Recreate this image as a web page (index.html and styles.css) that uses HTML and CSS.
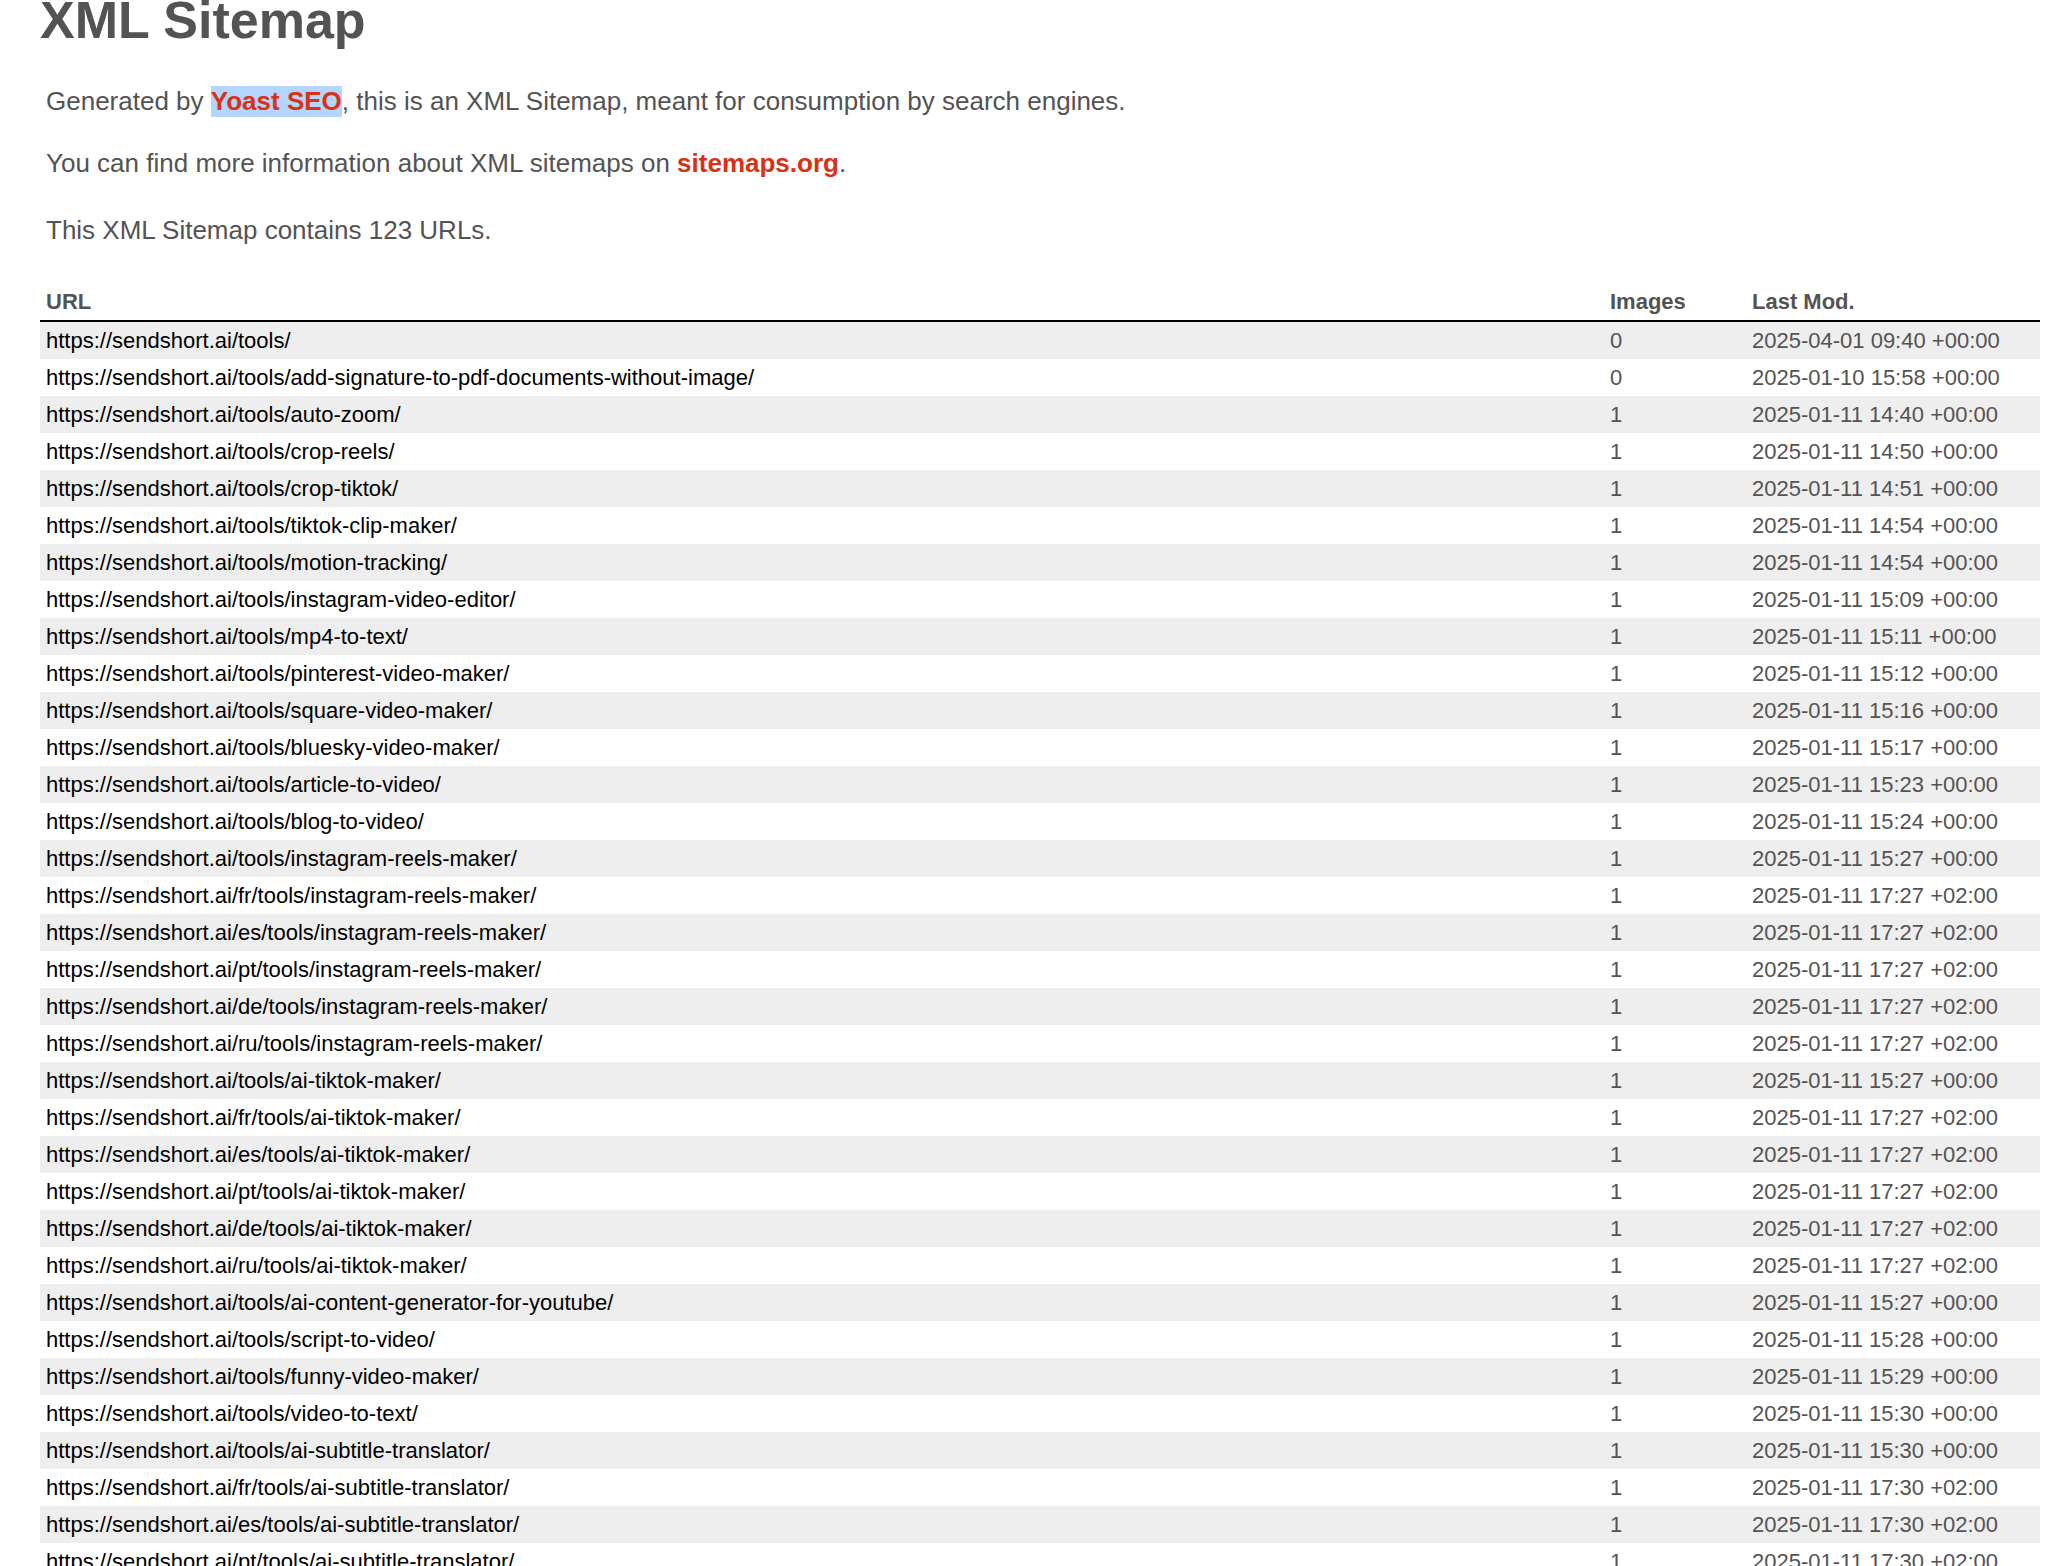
FILE: index.html
```html
<!DOCTYPE html>
<html lang="en">
<head>
<meta charset="utf-8">
<title>XML Sitemap</title>
<link rel="stylesheet" href="styles.css">
</head>
<body>
<div class="content">
  <h1 class="title">XML Sitemap</h1>
  <p class="expl expl-first">Generated by <a class="selected" href="#">Yoast SEO</a>, this is an XML Sitemap, meant for consumption by search engines.</p>
  <p class="expl expl-second">You can find more information about XML sitemaps on <a href="#">sitemaps.org</a>.</p>
  <p class="expl expl-third">This XML Sitemap contains 123 URLs.</p>
  <table class="sitemap">
    <colgroup>
      <col class="c-url">
      <col class="c-img">
      <col class="c-mod">
    </colgroup>
    <thead>
      <tr><th>URL</th><th>Images</th><th>Last Mod.</th></tr>
    </thead>
    <tbody>
      <tr><td><a href="#">https://sendshort.ai/tools/</a></td><td>0</td><td>2025-04-01 09:40 +00:00</td></tr>
      <tr><td><a href="#">https://sendshort.ai/tools/add-signature-to-pdf-documents-without-image/</a></td><td>0</td><td>2025-01-10 15:58 +00:00</td></tr>
      <tr><td><a href="#">https://sendshort.ai/tools/auto-zoom/</a></td><td>1</td><td>2025-01-11 14:40 +00:00</td></tr>
      <tr><td><a href="#">https://sendshort.ai/tools/crop-reels/</a></td><td>1</td><td>2025-01-11 14:50 +00:00</td></tr>
      <tr><td><a href="#">https://sendshort.ai/tools/crop-tiktok/</a></td><td>1</td><td>2025-01-11 14:51 +00:00</td></tr>
      <tr><td><a href="#">https://sendshort.ai/tools/tiktok-clip-maker/</a></td><td>1</td><td>2025-01-11 14:54 +00:00</td></tr>
      <tr><td><a href="#">https://sendshort.ai/tools/motion-tracking/</a></td><td>1</td><td>2025-01-11 14:54 +00:00</td></tr>
      <tr><td><a href="#">https://sendshort.ai/tools/instagram-video-editor/</a></td><td>1</td><td>2025-01-11 15:09 +00:00</td></tr>
      <tr><td><a href="#">https://sendshort.ai/tools/mp4-to-text/</a></td><td>1</td><td>2025-01-11 15:11 +00:00</td></tr>
      <tr><td><a href="#">https://sendshort.ai/tools/pinterest-video-maker/</a></td><td>1</td><td>2025-01-11 15:12 +00:00</td></tr>
      <tr><td><a href="#">https://sendshort.ai/tools/square-video-maker/</a></td><td>1</td><td>2025-01-11 15:16 +00:00</td></tr>
      <tr><td><a href="#">https://sendshort.ai/tools/bluesky-video-maker/</a></td><td>1</td><td>2025-01-11 15:17 +00:00</td></tr>
      <tr><td><a href="#">https://sendshort.ai/tools/article-to-video/</a></td><td>1</td><td>2025-01-11 15:23 +00:00</td></tr>
      <tr><td><a href="#">https://sendshort.ai/tools/blog-to-video/</a></td><td>1</td><td>2025-01-11 15:24 +00:00</td></tr>
      <tr><td><a href="#">https://sendshort.ai/tools/instagram-reels-maker/</a></td><td>1</td><td>2025-01-11 15:27 +00:00</td></tr>
      <tr><td><a href="#">https://sendshort.ai/fr/tools/instagram-reels-maker/</a></td><td>1</td><td>2025-01-11 17:27 +02:00</td></tr>
      <tr><td><a href="#">https://sendshort.ai/es/tools/instagram-reels-maker/</a></td><td>1</td><td>2025-01-11 17:27 +02:00</td></tr>
      <tr><td><a href="#">https://sendshort.ai/pt/tools/instagram-reels-maker/</a></td><td>1</td><td>2025-01-11 17:27 +02:00</td></tr>
      <tr><td><a href="#">https://sendshort.ai/de/tools/instagram-reels-maker/</a></td><td>1</td><td>2025-01-11 17:27 +02:00</td></tr>
      <tr><td><a href="#">https://sendshort.ai/ru/tools/instagram-reels-maker/</a></td><td>1</td><td>2025-01-11 17:27 +02:00</td></tr>
      <tr><td><a href="#">https://sendshort.ai/tools/ai-tiktok-maker/</a></td><td>1</td><td>2025-01-11 15:27 +00:00</td></tr>
      <tr><td><a href="#">https://sendshort.ai/fr/tools/ai-tiktok-maker/</a></td><td>1</td><td>2025-01-11 17:27 +02:00</td></tr>
      <tr><td><a href="#">https://sendshort.ai/es/tools/ai-tiktok-maker/</a></td><td>1</td><td>2025-01-11 17:27 +02:00</td></tr>
      <tr><td><a href="#">https://sendshort.ai/pt/tools/ai-tiktok-maker/</a></td><td>1</td><td>2025-01-11 17:27 +02:00</td></tr>
      <tr><td><a href="#">https://sendshort.ai/de/tools/ai-tiktok-maker/</a></td><td>1</td><td>2025-01-11 17:27 +02:00</td></tr>
      <tr><td><a href="#">https://sendshort.ai/ru/tools/ai-tiktok-maker/</a></td><td>1</td><td>2025-01-11 17:27 +02:00</td></tr>
      <tr><td><a href="#">https://sendshort.ai/tools/ai-content-generator-for-youtube/</a></td><td>1</td><td>2025-01-11 15:27 +00:00</td></tr>
      <tr><td><a href="#">https://sendshort.ai/tools/script-to-video/</a></td><td>1</td><td>2025-01-11 15:28 +00:00</td></tr>
      <tr><td><a href="#">https://sendshort.ai/tools/funny-video-maker/</a></td><td>1</td><td>2025-01-11 15:29 +00:00</td></tr>
      <tr><td><a href="#">https://sendshort.ai/tools/video-to-text/</a></td><td>1</td><td>2025-01-11 15:30 +00:00</td></tr>
      <tr><td><a href="#">https://sendshort.ai/tools/ai-subtitle-translator/</a></td><td>1</td><td>2025-01-11 15:30 +00:00</td></tr>
      <tr><td><a href="#">https://sendshort.ai/fr/tools/ai-subtitle-translator/</a></td><td>1</td><td>2025-01-11 17:30 +02:00</td></tr>
      <tr><td><a href="#">https://sendshort.ai/es/tools/ai-subtitle-translator/</a></td><td>1</td><td>2025-01-11 17:30 +02:00</td></tr>
      <tr><td><a href="#">https://sendshort.ai/pt/tools/ai-subtitle-translator/</a></td><td>1</td><td>2025-01-11 17:30 +02:00</td></tr>
      <tr><td><a href="#">https://sendshort.ai/de/tools/ai-subtitle-translator/</a></td><td>1</td><td>2025-01-11 17:30 +02:00</td></tr>
      <tr><td><a href="#">https://sendshort.ai/ru/tools/ai-subtitle-translator/</a></td><td>1</td><td>2025-01-11 17:30 +02:00</td></tr>
    </tbody>
  </table>
</div>
</body>
</html>
```

FILE: styles.css
```css
html, body {
  margin: 0;
  padding: 0;
  background: #fff;
}

body {
  font-family: "Liberation Sans", Helvetica, Arial, sans-serif;
  font-size: 26px;
  color: #545353;
}

.content {
  margin-left: 40px;
  width: 2000px;
}

.title {
  margin: 0;
  font-size: 52px;
  line-height: 40px;
  font-weight: bold;
  color: #545353;
}

.expl {
  margin: 0 6px;
  line-height: 31px;
}

.expl-first {
  margin-top: 46px;
}

.expl-second {
  margin-top: 31px;
}

.expl-third {
  margin-top: 36px;
}

.expl a {
  color: #da3114;
  font-weight: bold;
  text-decoration: none;
}

.expl a.selected {
  display: inline-block;
  background: #b4d6fe;
  line-height: 31px;
}

.sitemap {
  margin-top: 37px;
  width: 2000px;
  table-layout: fixed;
  border-collapse: separate;
  border-spacing: 0;
}

.c-url {
  width: 1564px;
}

.c-img {
  width: 142px;
}

.c-mod {
  width: 294px;
}

.sitemap th,
.sitemap td {
  padding: 6px 8px 6px 6px;
  font-size: 22px;
  line-height: 25px;
  text-align: left;
  white-space: nowrap;
}

.sitemap th {
  font-weight: bold;
  color: #545353;
  border-bottom: 2px solid #000;
}

.sitemap td {
  color: #545353;
}

.sitemap tbody tr:nth-child(odd) td {
  background: #eeeeee;
}

.sitemap td a {
  color: #000;
  text-decoration: none;
}
```
